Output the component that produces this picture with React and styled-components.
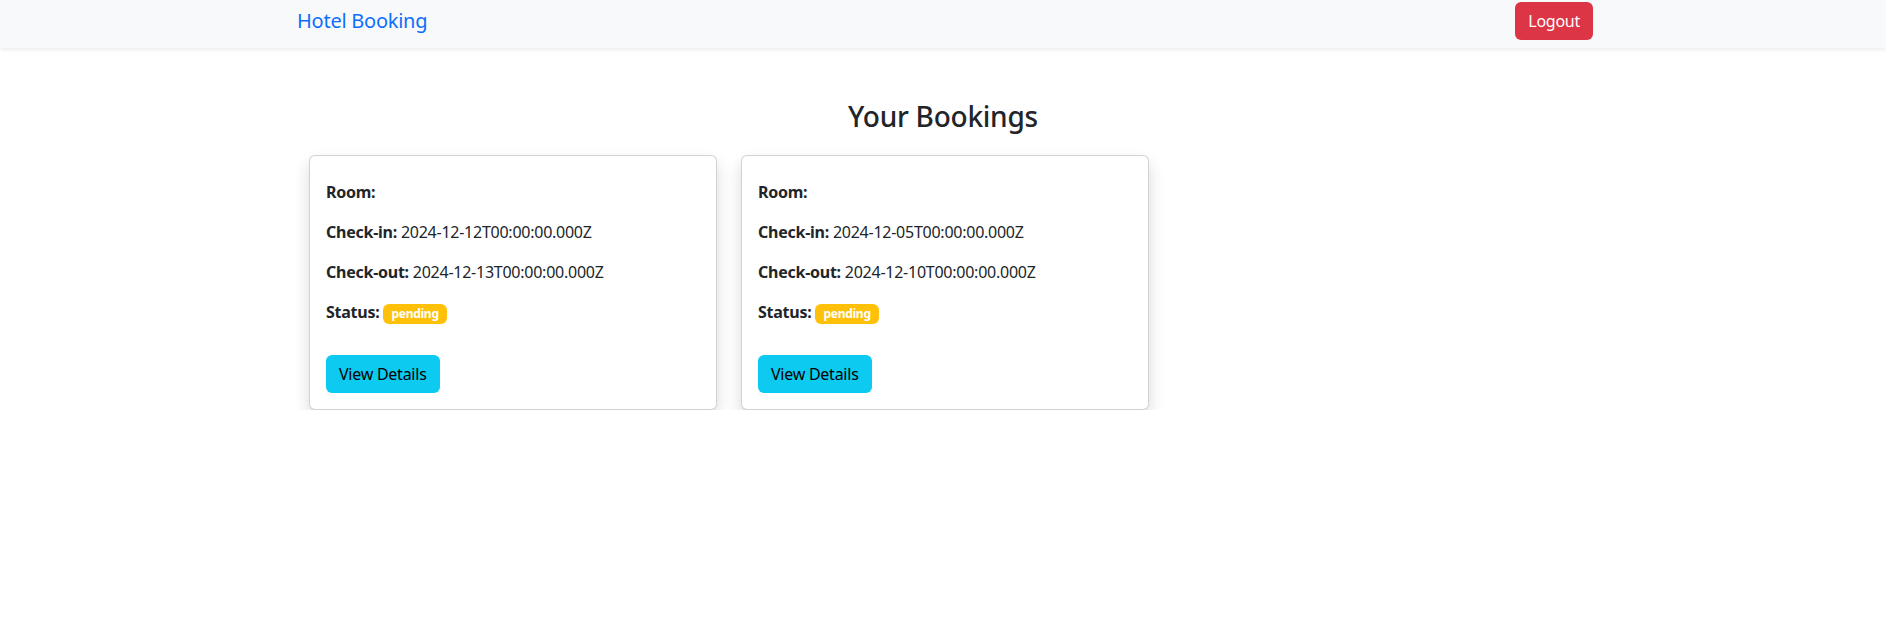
import styled, { createGlobalStyle } from 'styled-components'

const GlobalStyle = createGlobalStyle`
  * {
    box-sizing: border-box;
  }
  body {
    margin: 0;
    background: #fff;
    color: #212529;
    font-family: 'Noto Sans', 'Open Sans', sans-serif;
    font-size: 16px;
    line-height: 1.5;
    letter-spacing: -0.25px;
  }
`

const bookings = [
  { id: 1, checkIn: '2024-12-12T00:00:00.000Z', checkOut: '2024-12-13T00:00:00.000Z', status: 'pending' },
  { id: 2, checkIn: '2024-12-05T00:00:00.000Z', checkOut: '2024-12-10T00:00:00.000Z', status: 'pending' },
]

const App = () => {
  return (
    <>
      <GlobalStyle />
      <Navbar>
        <NavInner>
          <Brand href="#">Hotel Booking</Brand>
          <Button $variant="danger">Logout</Button>
        </NavInner>
      </Navbar>
      <Main>
        <Title>Your Bookings</Title>
        <CardList>
          {bookings.map(b => (
            <Card key={b.id}>
              <CardTitle />
              <Line>
                <strong>Room:</strong>
              </Line>
              <Line>
                <strong>Check-in:</strong> {b.checkIn}
              </Line>
              <Line>
                <strong>Check-out:</strong> {b.checkOut}
              </Line>
              <Line>
                <strong>Status:</strong> <Badge>{b.status}</Badge>
              </Line>
              <Button $variant="info" $top>View Details</Button>
            </Card>
          ))}
        </CardList>
      </Main>
    </>
  )
}

export default App

const Navbar = styled.nav`
  background-color: #f8f9fa;
  height: 48px;
  box-shadow: 0 2px 4px rgba(0, 0, 0, 0.075);
`

const NavInner = styled.div`
  max-width: 1320px;
  margin: 0 auto;
  padding: 2px 10px 0 12px;
  display: flex;
  align-items: center;
  justify-content: space-between;
`

const Brand = styled.a`
  color: #0d6efd;
  font-size: 20px;
  line-height: 30px;
  text-decoration: none;
  margin-left: 2px;
`

const Button = styled.button`
  font-family: inherit;
  font-size: 16px;
  line-height: 24px;
  letter-spacing: -0.25px;
  padding: 6px 12px;
  border: 1px solid transparent;
  border-radius: 6px;
  cursor: pointer;
  background-color: ${p => (p.$variant === 'danger' ? '#dc3545' : '#0dcaf0')};
  color: ${p => (p.$variant === 'danger' ? '#fff' : '#000')};
  margin-top: ${p => (p.$top ? '15px' : '0')};
  align-self: flex-start;
`

const Main = styled.main`
  max-width: 1320px;
  margin: 0 auto;
  padding: 52px 12px 0;
`

const Title = styled.h3`
  margin: 0 0 21px;
  text-align: center;
  font-size: 28px;
  font-weight: 500;
  line-height: 1.2;
`

const CardList = styled.div`
  display: grid;
  grid-template-columns: repeat(2, 408px);
  gap: 24px;
  padding-left: 14px;
`

const Card = styled.div`
  display: flex;
  flex-direction: column;
  padding: 16px;
  border: 1px solid rgba(0, 0, 0, 0.175);
  border-radius: 6px;
  background: #fff;
  box-shadow: 0 8px 16px rgba(0, 0, 0, 0.15);
`

const CardTitle = styled.h5`
  margin: 0 0 8px;
`

const Line = styled.p`
  margin: 0 0 16px;
  strong {
    font-weight: 700;
  }
`

const Badge = styled.span`
  display: inline-block;
  padding: 4px 8px;
  font-size: 12px;
  font-weight: 700;
  line-height: 1;
  color: #fff;
  background-color: #ffc107;
  border-radius: 6px;
  vertical-align: baseline;
`
